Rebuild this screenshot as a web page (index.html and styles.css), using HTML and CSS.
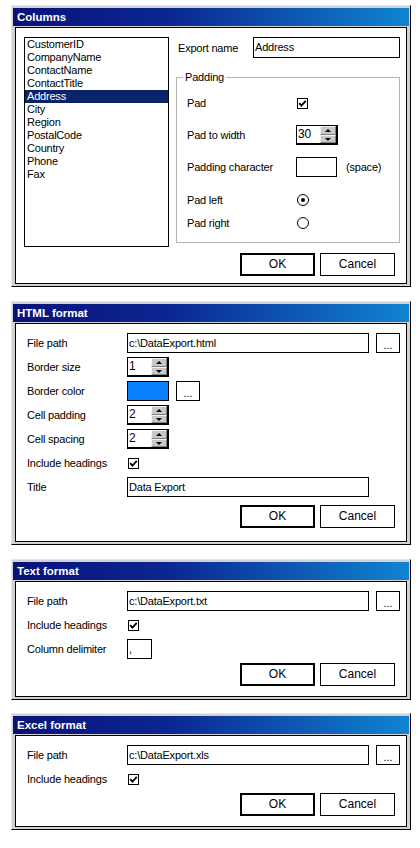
FILE: index.html
```html
<!DOCTYPE html>
<html>
<head>
<meta charset="utf-8">
<title>Export dialogs</title>
<link rel="stylesheet" href="styles.css">
</head>
<body>

<div class="dialog">
  <div class="titlebar">Columns</div>
  <div class="client cols-client">
    <div class="listbox">
      <div class="item">CustomerID</div>
      <div class="item">CompanyName</div>
      <div class="item">ContactName</div>
      <div class="item">ContactTitle</div>
      <div class="item sel">Address</div>
      <div class="item">City</div>
      <div class="item">Region</div>
      <div class="item">PostalCode</div>
      <div class="item">Country</div>
      <div class="item">Phone</div>
      <div class="item">Fax</div>
    </div>
    <div class="rightcol">
      <div class="exrow">
        <span class="exlabel">Export name</span>
        <div class="edit exname">Address</div>
      </div>
      <div class="group">
        <span class="legend">Padding</span>
        <div class="grow">
          <span class="glabel">Pad</span>
          <span class="check"><svg viewBox="0 0 9 9" width="9" height="9"><path d="M1.2 4.2 L3.4 6.6 L7.8 1.8" fill="none" stroke="#000" stroke-width="1.8"/></svg></span>
        </div>
        <div class="grow gap12">
          <span class="glabel">Pad to width</span>
          <div class="spin"><span class="spintext">30</span><span class="spinbtns"><span class="sb up"></span><span class="sb down"></span></span></div>
        </div>
        <div class="grow gap12">
          <span class="glabel">Padding character</span>
          <div class="edit padchar"></div>
          <span class="hint">(space)</span>
        </div>
        <div class="grow gap13">
          <span class="glabel">Pad left</span>
          <span class="radio on"></span>
        </div>
        <div class="grow gap3">
          <span class="glabel">Pad right</span>
          <span class="radio"></span>
        </div>
      </div>
      <div class="buttons">
        <div class="btn default">OK</div>
        <div class="btn">Cancel</div>
      </div>
    </div>
  </div>
</div>

<div class="dialog">
  <div class="titlebar">HTML format</div>
  <div class="client form-client">
    <div class="frow">
      <span class="flabel">File path</span>
      <div class="edit path">c:\DataExport.html</div>
      <div class="dots">...</div>
    </div>
    <div class="frow">
      <span class="flabel">Border size</span>
      <div class="spin"><span class="spintext">1</span><span class="spinbtns"><span class="sb up"></span><span class="sb down"></span></span></div>
    </div>
    <div class="frow">
      <span class="flabel">Border color</span>
      <div class="swatch"></div>
      <div class="dots">...</div>
    </div>
    <div class="frow">
      <span class="flabel">Cell padding</span>
      <div class="spin"><span class="spintext">2</span><span class="spinbtns"><span class="sb up"></span><span class="sb down"></span></span></div>
    </div>
    <div class="frow">
      <span class="flabel">Cell spacing</span>
      <div class="spin"><span class="spintext">2</span><span class="spinbtns"><span class="sb up"></span><span class="sb down"></span></span></div>
    </div>
    <div class="frow">
      <span class="flabel">Include headings</span>
      <span class="check"><svg viewBox="0 0 9 9" width="9" height="9"><path d="M1.2 4.2 L3.4 6.6 L7.8 1.8" fill="none" stroke="#000" stroke-width="1.8"/></svg></span>
    </div>
    <div class="frow">
      <span class="flabel">Title</span>
      <div class="edit path">Data Export</div>
    </div>
    <div class="buttons html-buttons">
      <div class="btn default">OK</div>
      <div class="btn">Cancel</div>
    </div>
  </div>
</div>

<div class="dialog before-last">
  <div class="titlebar">Text format</div>
  <div class="client form-client">
    <div class="frow">
      <span class="flabel">File path</span>
      <div class="edit path">c:\DataExport.txt</div>
      <div class="dots">...</div>
    </div>
    <div class="frow">
      <span class="flabel">Include headings</span>
      <span class="check"><svg viewBox="0 0 9 9" width="9" height="9"><path d="M1.2 4.2 L3.4 6.6 L7.8 1.8" fill="none" stroke="#000" stroke-width="1.8"/></svg></span>
    </div>
    <div class="frow">
      <span class="flabel">Column delimiter</span>
      <div class="edit delim">,</div>
    </div>
    <div class="buttons">
      <div class="btn default">OK</div>
      <div class="btn">Cancel</div>
    </div>
  </div>
</div>

<div class="dialog">
  <div class="titlebar">Excel format</div>
  <div class="client form-client">
    <div class="frow">
      <span class="flabel">File path</span>
      <div class="edit path">c:\DataExport.xls</div>
      <div class="dots">...</div>
    </div>
    <div class="frow">
      <span class="flabel">Include headings</span>
      <span class="check"><svg viewBox="0 0 9 9" width="9" height="9"><path d="M1.2 4.2 L3.4 6.6 L7.8 1.8" fill="none" stroke="#000" stroke-width="1.8"/></svg></span>
    </div>
    <div class="buttons">
      <div class="btn default">OK</div>
      <div class="btn">Cancel</div>
    </div>
  </div>
</div>

</body>
</html>
```

FILE: styles.css
```css
* { box-sizing: border-box; }

html, body {
  margin: 0;
  padding: 0;
  background: #fff;
}

body {
  padding: 5px 0 0 11px;
  font-family: "Liberation Sans", Arial, sans-serif;
  font-size: 11px;
  letter-spacing: -0.2px;
  color: #000;
}

/* ---------- window frame ---------- */
.dialog {
  width: 400px;
  border: 1px solid;
  border-color: #e6e6e6 #000 #000 #e6e6e6;
  background: #d2d2d2;
  padding: 2px 1px;
  margin-bottom: 14px;
}

.dialog.before-last {
  margin-bottom: 13px;
}

.titlebar {
  height: 18px;
  line-height: 18px;
  padding-left: 4px;
  color: #fff;
  font-weight: bold;
  font-size: 11.5px;
  letter-spacing: 0;
  background: linear-gradient(to right, #08137a 0%, #0b2590 38%, #1084d0 100%);
}

.client {
  margin: 1px 2px 0;
  border: 1px solid #000;
  background: #fff;
}

/* ---------- Columns dialog ---------- */
.cols-client {
  display: flex;
  align-items: flex-start;
  padding: 9px 6px 7px 8px;
}

.listbox {
  width: 145px;
  height: 210px;
  border: 1px solid #000;
  flex: none;
}

.item {
  height: 13px;
  line-height: 13px;
  padding-left: 2px;
  white-space: nowrap;
}

.item.sel {
  background: #0a246a;
  color: #fff;
}

.rightcol {
  width: 224px;
  margin-left: 7px;
  flex: none;
}

.exrow {
  display: flex;
  align-items: center;
  height: 21px;
}

.exlabel {
  width: 77px;
  padding-left: 2px;
}

.exname {
  width: 147px;
  height: 21px;
}

.group {
  position: relative;
  margin-top: 19px;
  border: 1px solid #b4b4b4;
  padding: 15px 0 9px 10px;
}

.legend {
  position: absolute;
  top: -7px;
  left: 6px;
  padding: 0 2px;
  line-height: 13px;
  background: #fff;
}

.grow {
  display: flex;
  align-items: center;
  height: 20px;
}

.gap12 { margin-top: 12px; }
.gap13 { margin-top: 13px; }
.gap3 { margin-top: 3px; }

.glabel {
  width: 109px;
  flex: none;
}

.padchar {
  width: 41px;
  height: 20px;
}

.hint {
  margin-left: 9px;
}

/* ---------- generic form dialogs ---------- */
.form-client {
  padding: 9px 6px 10px 11px;
}

.frow {
  display: flex;
  align-items: center;
  height: 20px;
  margin-bottom: 4px;
}

.flabel {
  width: 100px;
  flex: none;
  white-space: nowrap;
}

.path {
  width: 242px;
  height: 20px;
}

.delim {
  width: 25px;
  height: 20px;
  padding-left: 2px;
}

/* ---------- controls ---------- */
.edit {
  border: 1px solid #000;
  background: #fff;
  padding-left: 1px;
  line-height: 18px;
  white-space: nowrap;
  overflow: hidden;
  flex: none;
}

.dots {
  width: 24px;
  height: 20px;
  margin-left: 7px;
  border: 1px solid #000;
  background: #fff;
  text-align: center;
  line-height: 22px;
  letter-spacing: 0;
  flex: none;
}

.swatch {
  width: 42px;
  height: 20px;
  border: 1px solid #000;
  background: #0a80ff;
  flex: none;
}

.spin {
  display: flex;
  width: 42px;
  height: 20px;
  border: 1px solid #000;
  border-right-width: 2px;
  border-bottom-width: 2px;
  background: #fff;
  flex: none;
}

.spintext {
  flex: 1;
  padding-left: 1px;
  line-height: 17px;
  font-size: 12px;
}

.spinbtns {
  display: flex;
  flex-direction: column;
  width: 16px;
}

.sb {
  position: relative;
  flex: 1;
  background: #c8c8c8;
  border: 1px solid;
  border-color: #f4f4f4 #808080 #808080 #f4f4f4;
}

.sb::after {
  content: "";
  position: absolute;
  left: 4px;
  top: 2px;
  border-left: 3px solid transparent;
  border-right: 3px solid transparent;
}

.sb.up::after {
  border-bottom: 3px solid #000;
}

.sb.down::after {
  border-top: 3px solid #000;
}

.check {
  display: flex;
  align-items: center;
  justify-content: center;
  width: 11px;
  height: 11px;
  margin-left: 1px;
  border: 1px solid #000;
  background: #fff;
  flex: none;
}

.check svg {
  display: block;
}

.radio {
  position: relative;
  width: 12px;
  height: 12px;
  margin-left: 1px;
  border: 1px solid #000;
  border-radius: 50%;
  background: #fff;
  flex: none;
}

.radio.on::after {
  content: "";
  position: absolute;
  left: 3px;
  top: 3px;
  width: 4px;
  height: 4px;
  border-radius: 50%;
  background: #000;
}

/* ---------- buttons ---------- */
.buttons {
  display: flex;
  justify-content: flex-end;
  gap: 5px;
  margin-right: 5px;
}

.cols-client .buttons {
  margin-top: 10px;
}

.html-buttons {
  margin-top: 8px;
  margin-bottom: 3px;
}

.btn {
  width: 75px;
  height: 23px;
  border: 1px solid #000;
  background: #fff;
  text-align: center;
  line-height: 21px;
  font-size: 12px;
  letter-spacing: 0;
}

.btn.default {
  border-width: 2px;
  line-height: 19px;
}
```
